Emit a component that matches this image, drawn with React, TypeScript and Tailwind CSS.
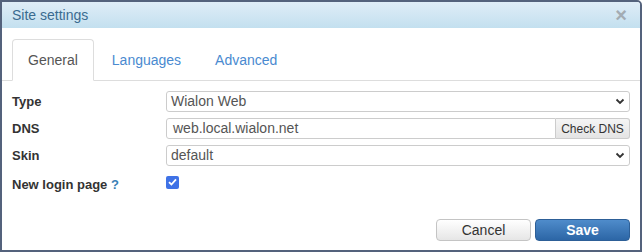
import { useState } from 'react';

function Chevron() {
  return (
    <svg width="10" height="7" viewBox="0 0 10 7" className="shrink-0">
      <path d="M1.5 1.5 L5 5 L8.5 1.5" fill="none" stroke="#333" strokeWidth="1.8" />
    </svg>
  );
}

function SelectBox({ value }: { value: string }) {
  return (
    <div className="h-[21px] flex items-center justify-between border border-[#ccc] rounded-[3px] bg-white pl-[4px] pr-[4px] text-[14px] text-[#555]">
      <span>{value}</span>
      <Chevron />
    </div>
  );
}

export default function App() {
  const [tab, setTab] = useState('General');
  const tabs = ['General', 'Languages', 'Advanced'];

  return (
    <div className="w-[642px] h-[252px] border-2 border-[#54627c] rounded-tr-[5px] bg-white flex flex-col font-['Liberation_Sans',Arial,sans-serif] overflow-hidden">
      <div className="h-[26px] shrink-0 flex items-center justify-between pl-[10px] pr-[13px] bg-gradient-to-b from-[#dfedf7] to-[#c3e0ef]">
        <span className="text-[14px] text-[#3a6b90]">Site settings</span>
        <span className="text-[20px] leading-none font-bold text-[#a3acb3]">×</span>
      </div>

      <div className="mt-[11px] flex pl-[10px] border-b border-[#ddd]">
        {tabs.map((t) => (
          <button
            key={t}
            onClick={() => setTab(t)}
            className={`mr-[2px] -mb-px px-[15px] py-[10px] text-[14px] leading-[20px] rounded-t-[4px] border ${
              tab === t ? 'border-[#ddd] border-b-white bg-white text-[#555]' : 'border-transparent text-[#4a8ad0]'
            }`}
          >
            {t}
          </button>
        ))}
      </div>

      <div className="pt-[10px] pl-[10px] pr-[10px] flex flex-col gap-[6px]">
        <div className="grid grid-cols-[154px_1fr] items-center">
          <span className="text-[13px] font-bold text-[#333]">Type</span>
          <SelectBox value="Wialon Web" />
        </div>
        <div className="grid grid-cols-[154px_1fr] items-center">
          <span className="text-[13px] font-bold text-[#333]">DNS</span>
          <div className="h-[21px] flex">
            <div className="flex-1 flex items-center border border-[#ccc] rounded-l-[3px] pl-[6px] text-[14px] text-[#555]">
              web.local.wialon.net
            </div>
            <button className="w-[74px] border border-l-0 border-[#ccc] rounded-r-[3px] bg-gradient-to-b from-[#f5f5f5] to-[#e4e4e4] text-[12px] text-[#333]">
              Check DNS
            </button>
          </div>
        </div>
        <div className="grid grid-cols-[154px_1fr] items-center">
          <span className="text-[13px] font-bold text-[#333]">Skin</span>
          <SelectBox value="default" />
        </div>
        <div className="grid grid-cols-[154px_1fr] items-center mt-[3px]">
          <span className="text-[13px] font-bold text-[#333]">
            New login page <span className="text-[#3a7fb5]">?</span>
          </span>
          <div className="w-[13px] h-[13px] mb-[5px] rounded-[2px] bg-[#3f72e6] flex items-center justify-center">
            <svg width="9" height="8" viewBox="0 0 9 8">
              <path d="M1 4.2 L3.4 6.5 L8 1.3" fill="none" stroke="white" strokeWidth="1.8" />
            </svg>
          </div>
        </div>
      </div>

      <div className="mt-auto mb-[9px] pr-[10px] flex justify-end gap-[4px]">
        <button className="w-[95px] h-[22px] border border-[#c4c4c4] rounded-[4px] bg-gradient-to-b from-white to-[#e6e6e6] text-[14px] text-[#333]">
          Cancel
        </button>
        <button className="w-[95px] h-[22px] border border-[#2d5f97] rounded-[4px] bg-gradient-to-b from-[#4f8ccb] to-[#2c66a6] text-[14px] font-bold text-white">
          Save
        </button>
      </div>
    </div>
  );
}
